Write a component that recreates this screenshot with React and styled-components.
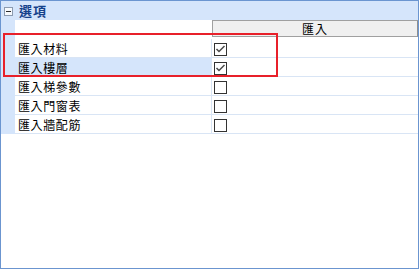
import React from "react";
import styled, { createGlobalStyle } from "styled-components";

const GlobalStyle = createGlobalStyle`
  html, body {
    margin: 0;
    padding: 0;
    background: #ffffff;
  }
  body {
    font-family: "Noto Sans CJK TC", "Noto Sans", sans-serif;
    font-size: 12px;
  }
`;

const Frame = styled.div`
  position: relative;
  box-sizing: border-box;
  width: 419px;
  height: 269px;
  border: 1px solid #6b95d0;
  background: #ffffff;
  display: flex;
  flex-direction: column;
`;

const CategoryBar = styled.div`
  height: 19px;
  background: #d5e5fb;
  display: flex;
  align-items: center;
  gap: 6px;
  padding-left: 3px;
`;

const Toggle = styled.span`
  box-sizing: border-box;
  width: 9px;
  height: 9px;
  margin-top: 2px;
  border: 1px solid #8c9bb0;
  background: #f6f9fd;
  display: flex;
  align-items: center;
  justify-content: center;
  &::after {
    content: "";
    width: 5px;
    height: 1px;
    background: #2b2b2b;
  }
`;

const CategoryTitle = styled.span`
  font-size: 13px;
  font-weight: bold;
  color: #15428b;
  line-height: 19px;
  letter-spacing: 1px;
`;

const Body = styled.div`
  display: flex;
`;

const Gutter = styled.div`
  width: 14px;
  background: #d5e5fb;
`;

const Table = styled.div`
  flex: 1;
  display: grid;
  grid-template-columns: 197px 1fr;
  grid-auto-rows: 19px;
`;

const HeadBlank = styled.div`
  height: 18px;
  background: #ffffff;
`;

const HeadCell = styled.div`
  box-sizing: border-box;
  height: 17px;
  background: #f0f0f0;
  border: 1px solid #a0a0a0;
  border-right-color: #8f8f8f;
  display: flex;
  align-items: center;
  justify-content: center;
  color: #000;
  font-size: 12px;
  letter-spacing: 1px;
`;

const LabelCell = styled.div`
  box-sizing: border-box;
  border-bottom: 1px solid #d9e5f5;
  border-right: 1px solid #d9e5f5;
  background: ${(p) => (p.$selected ? "#d5e5fb" : "#ffffff")};
  padding-left: 3px;
  display: flex;
  align-items: center;
  color: #000;
  letter-spacing: 0.6px;
`;

const CheckCell = styled.div`
  box-sizing: border-box;
  border-bottom: 1px solid #d9e5f5;
  background: #ffffff;
  padding-left: 2px;
  padding-top: 2px;
  display: flex;
  align-items: center;
`;

const Box = styled.span`
  box-sizing: border-box;
  width: 13px;
  height: 13px;
  border: 1px solid #333333;
  background: #ffffff;
  display: flex;
  align-items: center;
  justify-content: center;
`;

const Highlight = styled.div`
  position: absolute;
  left: 2px;
  top: 32px;
  width: 275px;
  height: 44px;
  box-sizing: border-box;
  border: 2px solid #e8202a;
  pointer-events: none;
`;

const rows = [
  { label: "匯入材料", checked: true },
  { label: "匯入樓層", checked: true, selected: true },
  { label: "匯入梯參數", checked: false },
  { label: "匯入門窗表", checked: false },
  { label: "匯入牆配筋", checked: false },
];

function Check({ checked }) {
  return (
    <Box>
      {checked && (
        <svg width="11" height="11" viewBox="0 0 11 11">
          <path d="M1.5 5 L4 7.5 L9.5 2" fill="none" stroke="#4a4a4a" strokeWidth="1.5" />
        </svg>
      )}
    </Box>
  );
}

export default function App() {
  return (
    <>
      <GlobalStyle />
      <Frame>
        <CategoryBar>
          <Toggle />
          <CategoryTitle>選項</CategoryTitle>
        </CategoryBar>
        <Body>
          <Gutter />
          <Table>
            <HeadBlank />
            <HeadCell>匯入</HeadCell>
            {rows.map((r) => (
              <React.Fragment key={r.label}>
                <LabelCell $selected={r.selected}>{r.label}</LabelCell>
                <CheckCell>
                  <Check checked={r.checked} />
                </CheckCell>
              </React.Fragment>
            ))}
          </Table>
        </Body>
        <Highlight />
      </Frame>
    </>
  );
}
